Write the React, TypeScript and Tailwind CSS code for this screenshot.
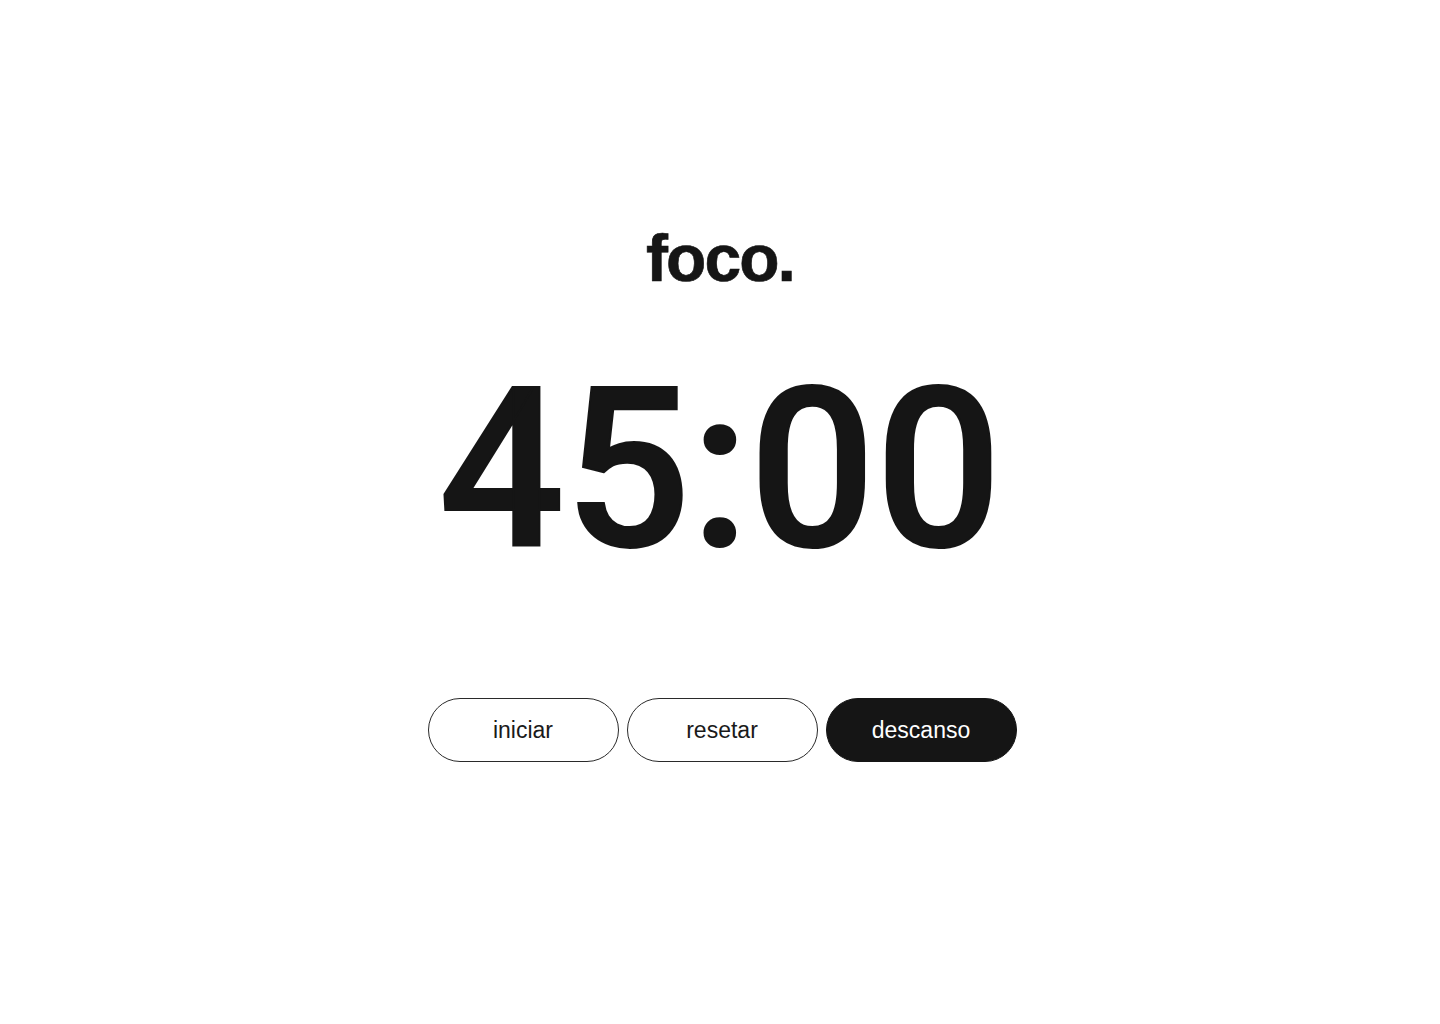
import { useState } from "react";

export default function App() {
  const [running, setRunning] = useState(false);

  return (
    <div className="min-h-screen w-full bg-white flex flex-col items-center pt-[225px] text-[#151515]">
      {/* Brand */}
      <h1 className="font-['Liberation_Sans',Arial,sans-serif] font-bold text-[66px] leading-none tracking-[-0.03em] [-webkit-text-stroke:0.6px_#151515]">
        foco.
      </h1>

      {/* Timer */}
      <div className="mt-[68px] font-['Roboto',sans-serif] font-medium text-[222px] leading-none tabular-nums [-webkit-text-stroke:2px_#151515]">
        45:00
      </div>

      {/* Controls */}
      <div className="mt-[117px] flex items-center gap-2 ml-1 font-['Liberation_Sans',Arial,sans-serif] text-[23px]">
        <button
          onClick={() => setRunning(!running)}
          className="w-[191px] h-16 rounded-full border border-[#2a2a2a] bg-white text-[#1a1a1a]"
        >
          iniciar
        </button>
        <button className="w-[191px] h-16 rounded-full border border-[#2a2a2a] bg-white text-[#1a1a1a]">
          resetar
        </button>
        <button className="w-[191px] h-16 rounded-full border border-[#151515] bg-[#151515] text-white">
          descanso
        </button>
      </div>
    </div>
  );
}
